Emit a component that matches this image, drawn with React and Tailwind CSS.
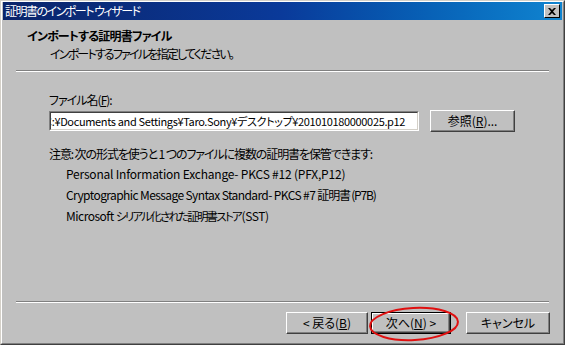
import React from "react";

const font = {
  fontFamily: '"Noto Sans CJK JP", "Liberation Sans", sans-serif',
};

const Btn = ({ children, isDefault, className = "" }) => (
  <div
    className={`h-[22px] flex items-center justify-center bg-[#c0c0c0] text-[12px] text-black ${
      isDefault ? "border border-black" : ""
    } ${className}`}
  >
    <div className="w-full h-full border-t border-l border-white border-r border-b border-r-[#404040] border-b-[#404040] flex items-center justify-center shadow-[inset_-1px_-1px_0_#808080]">
      {children}
    </div>
  </div>
);

const Rule = () => (
  <div className="mx-[14px] mr-[14px]">
    <div className="h-px bg-[#808080]" />
    <div className="h-px bg-white" />
  </div>
);

export default function App() {
  return (
    <div
      className="w-[565px] h-[345px] bg-[#c0c0c0] border border-t-[#d4d0c8] border-l-[#d4d0c8] border-r-[#404040] border-b-[#404040] [font-feature-settings:'palt'] leading-none text-black overflow-hidden"
      style={font}
    >
      <div className="h-full flex flex-col border border-t-white border-l-white border-r-[#808080] border-b-[#808080]">
        {/* title bar */}
        <div className="h-[18px] mx-px flex items-center justify-between bg-gradient-to-r from-[#0a246a] via-[#0a3a9a] to-[#1084d0] pl-[2px] pr-[2px]">
          <span className="text-white text-[12px] tracking-[-1.5px]">証明書のインポート ウィザード</span>
          <div className="w-[16px] h-[14px] bg-[#c0c0c0] border-t border-l border-white border-r border-b border-r-black border-b-black flex items-center justify-center">
            <svg width="8" height="7" viewBox="0 0 8 7">
              <path d="M0 0h2l2 2 2-2h2L5 3.5 8 7H6L4 5 2 7H0l3-3.5z" fill="black" />
            </svg>
          </div>
        </div>

        {/* header */}
        <div className="pt-[10px] pl-[25px]">
          <div className="text-[12px] font-bold h-[14px] tracking-[-0.8px]">インポートする証明書ファイル</div>
          <div className="text-[12px] pl-[23px] mt-[4px] tracking-[-1.8px]">インポートするファイルを指定してください。</div>
        </div>
        <div className="mt-[10px]">
          <Rule />
        </div>

        {/* body */}
        <div className="flex-1 pl-[47px] pr-[48px] pt-[22px] text-[12px]">
          <div className="tracking-[-1px]">
            ファイル名(<span className="underline">F</span>):
          </div>
          <div className="flex items-center mt-[4px] gap-[11px]">
            <div className="w-[371px] h-[20px] bg-white border border-t-[#808080] border-l-[#808080] border-r-white border-b-white overflow-hidden">
              <div className="h-full border border-t-[#404040] border-l-[#404040] border-r-[#d4d0c8] border-b-[#d4d0c8] flex items-center overflow-hidden whitespace-nowrap">
                <span className="-ml-[6px] text-[11px] tracking-[-0.35px]">
                  C:¥Documents and Settings¥Taro.Sony¥デスクトップ¥201010180000025.p12
                </span>
              </div>
            </div>
            <Btn className="w-[85px]">
              参照(<span className="underline">R</span>)...
            </Btn>
          </div>

          <div className="mt-[16px] tracking-[-1.1px]">
            注意: 次の形式を使うと 1 つのファイルに複数の証明書を保管できます:
          </div>
          <div className="pl-[17px] flex flex-col gap-[9px] mt-[8px]">
            <div className="tracking-[-0.2px]">Personal Information Exchange- PKCS #12 (PFX,P12)</div>
            <div>
              <span className="tracking-[-0.6px]">Cryptographic Message Syntax Standard- PKCS #7 </span>
              <span className="tracking-[-1.2px]">証明書 (P7B)</span>
            </div>
            <div>
              <span className="tracking-[-0.5px]">Microsoft </span>
              <span className="text-[11.5px] tracking-[-1.8px]">シリアル化された証明書ストア </span>
              <span className="tracking-[-0.4px]">(SST)</span>
            </div>
          </div>
        </div>

        {/* footer */}
        <Rule />
        <div className="relative flex justify-end items-center pr-[13px] pt-[9px] pb-[9px]">
          <Btn className="w-[82px]">
            &lt; 戻る(<span className="underline">B</span>)
          </Btn>
          <Btn isDefault className="w-[80px] ml-[3px]">
            次へ(<span className="underline">N</span>) &gt;
          </Btn>
          <Btn className="w-[84px] ml-[15px]">キャンセル</Btn>
          <svg
            className="absolute left-[366px] top-[2px]"
            width="92"
            height="38"
            viewBox="0 0 92 38"
          >
            <ellipse cx="46" cy="19" rx="44" ry="16" fill="none" stroke="#e01010" strokeWidth="2" transform="rotate(-3 46 19)" />
          </svg>
        </div>
      </div>
    </div>
  );
}
